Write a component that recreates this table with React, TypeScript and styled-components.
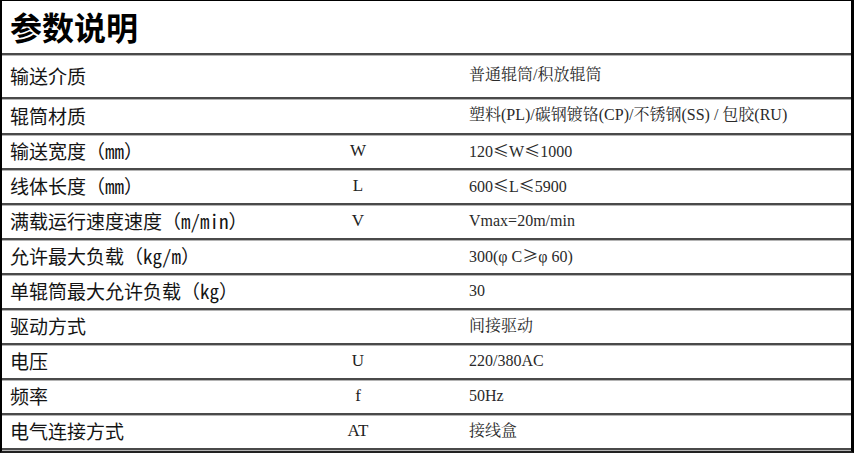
import React from "react";
import styled, { createGlobalStyle } from "styled-components";

const Global = createGlobalStyle`
  html, body { margin: 0; padding: 0; background: #ffffff; }
  body { width: 854px; height: 453px; overflow: hidden; }
`;

const Frame = styled.div`
  box-sizing: border-box;
  width: 854px;
  height: 453px;
  border-top: 1px solid #000;
  border-left: 2px solid #000;
  border-right: 3px solid #000;
  border-bottom: 2px solid #222;
  padding-bottom: 1px;
  display: flex;
  flex-direction: column;
  overflow: hidden;
  background: #fff;
`;

const TitleBar = styled.div`
  box-sizing: border-box;
  height: 54px;
  display: flex;
  align-items: center;
  padding: 0 0 2px 8px;
  border-bottom: 2px solid #4a4a4a;
  box-shadow: 0 1px 0 #b4b4b4;
  font-family: "Noto Sans CJK SC", sans-serif;
  font-weight: 700;
  font-size: 32px;
  color: #000;
  letter-spacing: 0;
`;

const Row = styled.div<{ $h: number }>`
  box-sizing: border-box;
  height: ${(p) => p.$h}px;
  display: grid;
  grid-template-columns: 300px 96px 1fr;
  align-items: center;
  padding: 0 0 2px 8px;
  border-bottom: 2px solid #4a4a4a;
  box-shadow: 0 1px 0 #b4b4b4;
`;

const Label = styled.div`
  font-family: "Noto Sans Mono CJK SC", "Noto Sans CJK SC", sans-serif;
  font-weight: 500;
  font-size: 19px;
  color: #141414;
  white-space: nowrap;
  line-height: 1;
`;

const Sym = styled.div`
  text-align: center;
  font-family: "Liberation Serif", serif;
  font-size: 17px;
  color: #222;
  line-height: 1;
`;

const Value = styled.div`
  padding-left: 63px;
  font-family: "Liberation Serif", "Noto Serif CJK SC", "Noto Sans CJK SC", serif;
  font-size: 16px;
  color: #2a2a2a;
  white-space: nowrap;
  line-height: 1;
`;

const Wide = styled.span`
  font-family: "Noto Sans CJK SC", sans-serif;
`;

type Item = { label: string; sym?: string; value: React.ReactNode; h: number };

const items: Item[] = [
  { label: "输送介质", value: "普通辊筒/积放辊筒", h: 44 },
  { label: "辊筒材质", value: "塑料(PL)/碳钢镀铬(CP)/不锈钢(SS) / 包胶(RU)", h: 36 },
  {
    label: "输送宽度（mm）",
    sym: "W",
    value: (
      <>
        120<Wide>≤</Wide>W<Wide>≤</Wide>1000
      </>
    ),
    h: 35,
  },
  {
    label: "线体长度（mm）",
    sym: "L",
    value: (
      <>
        600<Wide>≤</Wide>L<Wide>≤</Wide>5900
      </>
    ),
    h: 35,
  },
  { label: "满载运行速度速度（m/min）", sym: "V", value: "Vmax=20m/min", h: 35 },
  {
    label: "允许最大负载（kg/m）",
    value: (
      <>
        300(φ C<Wide>≥</Wide>φ 60)
      </>
    ),
    h: 35,
  },
  { label: "单辊筒最大允许负载（kg）", value: "30", h: 35 },
  { label: "驱动方式", value: "间接驱动", h: 35 },
  { label: "电压", sym: "U", value: "220/380AC", h: 35 },
  { label: "频率", sym: "f", value: "50Hz", h: 35 },
  { label: "电气连接方式", sym: "AT", value: "接线盒", h: 35 },
];

export default function App() {
  return (
    <>
      <Global />
      <Frame>
        <TitleBar>参数说明</TitleBar>
        {items.map((it, i) => (
          <Row key={i} $h={it.h}>
            <Label>{it.label}</Label>
            <Sym>{it.sym ?? ""}</Sym>
            <Value>{it.value}</Value>
          </Row>
        ))}
      </Frame>
    </>
  );
}
